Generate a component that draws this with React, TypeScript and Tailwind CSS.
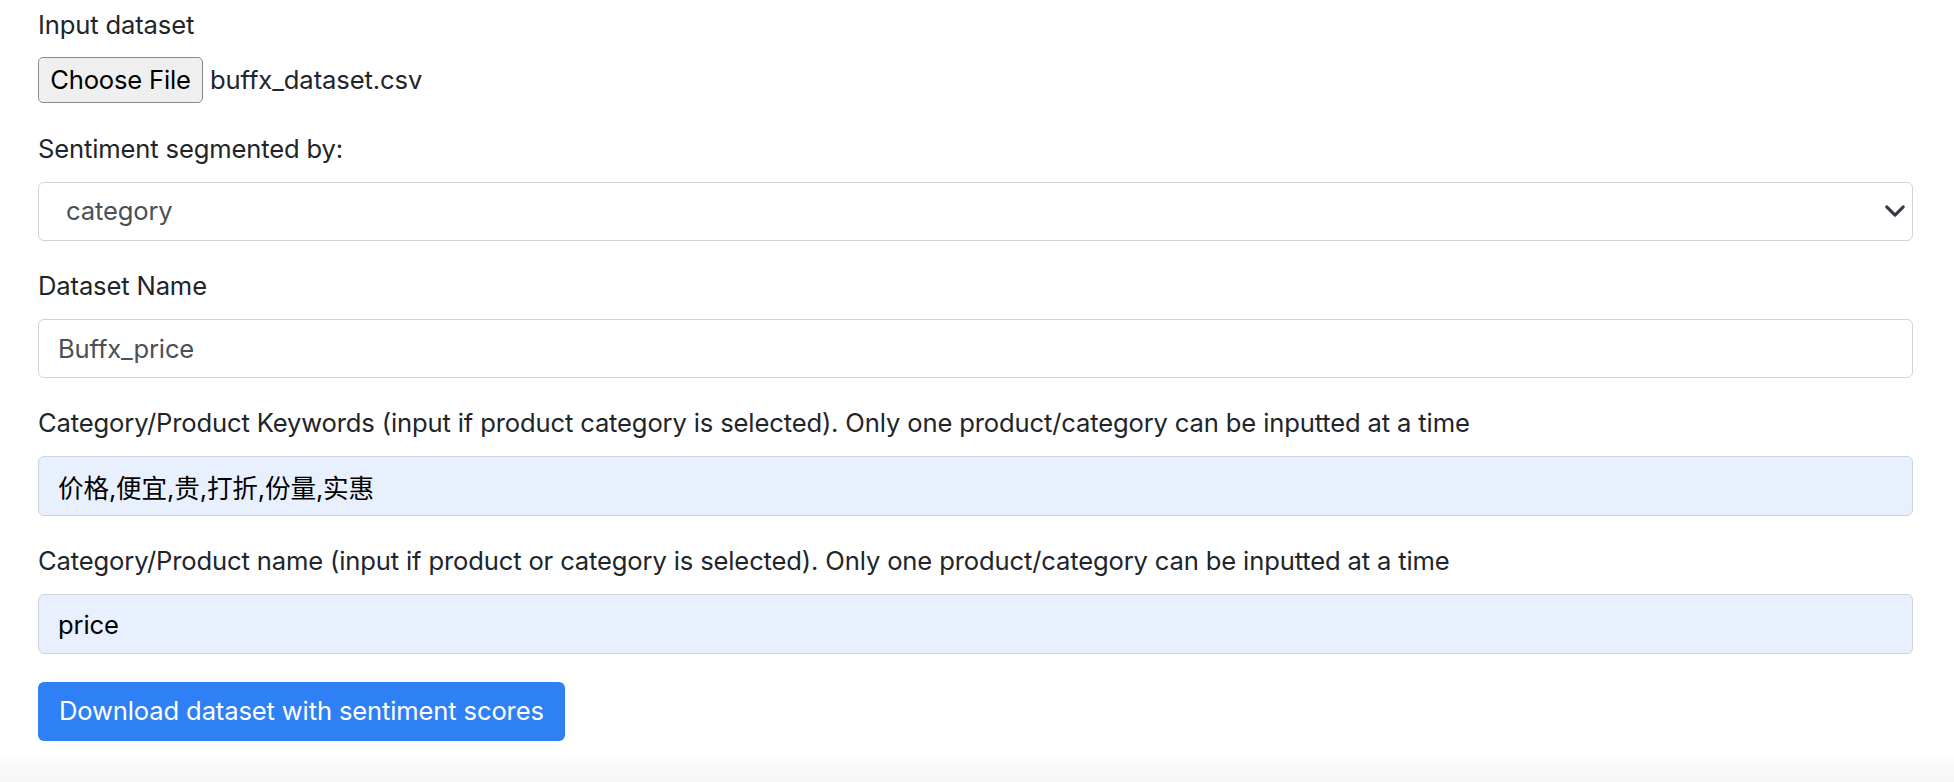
import React from 'react';

const font = { fontFamily: 'Inter, "Noto Sans CJK SC", sans-serif' };

const Label: React.FC<{ children: React.ReactNode }> = ({ children }) => (
  <label className="block text-[25.6px] leading-[38px] mb-[14px] text-[#212529] tracking-[-0.15px]">{children}</label>
);

const App: React.FC = () => {
  return (
    <div className="w-full min-h-[782px] bg-white" style={font}>
      <div className="pl-[38px] pr-[41px] pt-[6px]">
        <label className="block text-[25.6px] leading-[38px] mb-[13px] text-[#212529] tracking-[-0.15px]">Input dataset</label>
        <div className="flex items-center h-[46px]">
          <button className="h-[46px] w-[165px] bg-[#efefef] border border-[#8a8a8a] rounded-[5px] text-[25.6px] text-black tracking-[-0.2px]">
            Choose File
          </button>
          <span className="ml-[7px] text-[25.6px] text-[#212529] tracking-[-0.1px]">buffx_dataset.csv</span>
        </div>

        <div className="mt-[27px]">
          <Label>Sentiment segmented by:</Label>
          <div className="relative">
            <select
              defaultValue="category"
              className="appearance-none w-full h-[59px] pl-[27px] pr-[40px] bg-white border border-[#ced4da] rounded-[6px] text-[25.6px] text-[#495057] tracking-[-0.15px] outline-none"
            >
              <option value="category">category</option>
              <option value="product">product</option>
            </select>
            <svg className="absolute right-[7px] top-[18px] w-[22px] h-[22px] pointer-events-none" viewBox="0 0 16 16" fill="none">
              <path d="m2 5 6 6 6-6" stroke="#343a40" strokeWidth="2.2" strokeLinecap="round" strokeLinejoin="round" />
            </svg>
          </div>
        </div>

        <div className="mt-[26px]">
          <Label>Dataset Name</Label>
          <input
            defaultValue="Buffx_price"
            className="w-full h-[59px] px-[19px] bg-white border border-[#ced4da] rounded-[6px] text-[25.6px] text-[#495057] tracking-[-0.15px] outline-none"
          />
        </div>

        <div className="mt-[26px]">
          <Label>Category/Product Keywords (input if product category is selected). Only one product/category can be inputted at a time</Label>
          <input
            defaultValue="价格,便宜,贵,打折,份量,实惠"
            className="w-full h-[60px] px-[19px] bg-[#e8f0fe] border border-[#ced4da] rounded-[6px] text-[25.6px] text-black tracking-[-0.15px] outline-none"
          />
        </div>

        <div className="mt-[26px]">
          <Label>Category/Product name (input if product or category is selected). Only one product/category can be inputted at a time</Label>
          <input
            defaultValue="price"
            className="w-full h-[60px] px-[19px] bg-[#e8f0fe] border border-[#ced4da] rounded-[6px] text-[25.6px] text-black tracking-[-0.15px] outline-none"
          />
        </div>

        <button className="mt-[28px] h-[59px] px-[21px] bg-[#2f7ff5] rounded-[6px] text-[25.6px] text-white tracking-[-0.15px]">
          Download dataset with sentiment scores
        </button>
      </div>
      <div className="mt-[9px] h-[32px] bg-gradient-to-b from-white to-[#f6f6f6]" />
    </div>
  );
};

export default App;
